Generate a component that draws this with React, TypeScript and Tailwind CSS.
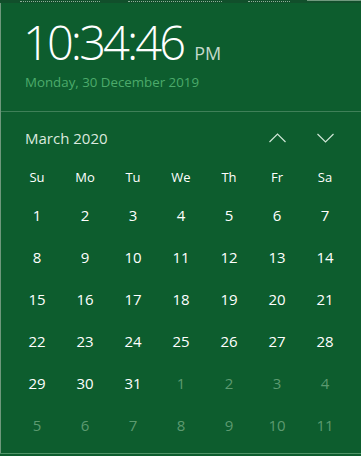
const days: { n: number; muted: boolean }[] = [
  ...Array.from({ length: 31 }, (_, i) => ({ n: i + 1, muted: false })),
  ...Array.from({ length: 11 }, (_, i) => ({ n: i + 1, muted: true })),
];

const weekdays = ["Su", "Mo", "Tu", "We", "Th", "Fr", "Sa"];

const Chevron = ({ up }: { up?: boolean }) => (
  <svg width="17" height="10" viewBox="0 0 17 10" fill="none">
    <path
      d={up ? "M0.5 9 L8.5 1 L16.5 9" : "M0.5 1 L8.5 9 L16.5 1"}
      stroke="#cfe6d6"
      strokeWidth="1.2"
    />
  </svg>
);

// bottoms of the window tab labels peeking in at the top edge
const tabMarks = [
  [20, 80],
  [128, 94],
  [248, 42],
];

export default function App() {
  return (
    <div
      className="w-[361px] h-[456px] bg-[#0d5d2e] overflow-hidden flex flex-col"
      style={{ fontFamily: '"Open Sans", "Noto Sans", sans-serif' }}
    >
      <div className="h-[3px] bg-[#114f2b] flex items-start">
        {tabMarks.map(([x, w], i) => (
          <div
            key={i}
            className="h-[2px] border-b border-dotted border-[#8fb09b]"
            style={{ marginLeft: i === 0 ? x : x - tabMarks[i - 1][0] - tabMarks[i - 1][1], width: w }}
          />
        ))}
        <div className="ml-auto w-[54px] h-[1px] bg-[#6f9a7e]" />
      </div>

      <div className="flex-1 flex flex-col border-l border-[#6e987c]">
        <div className="h-[109px] pl-[22px] pt-[14px] border-b border-[#3f8058]">
          <div className="flex items-baseline text-white">
            <span className="text-[47px] font-light leading-[50px] tracking-[-2.9px]">
              10:34:46
            </span>
            <span className="ml-[11px] text-[18px] text-[#c4d9cb]">PM</span>
          </div>
          <div className="mt-[7px] ml-[2px] text-[13.3px] leading-[16px] text-[#4cab6b]">
            Monday, 30 December 2019
          </div>
        </div>

        <div className="h-[50px] flex items-center pl-[24px] pr-[27px] pt-[2px]">
          <span className="text-[15px] text-[#dbe9df]">March 2020</span>
          <div className="ml-auto flex items-center gap-[31px]">
            <Chevron up />
            <Chevron />
          </div>
        </div>

        <div className="pl-[12px] grid grid-cols-[repeat(7,48px)]">
          {weekdays.map((d) => (
            <div
              key={d}
              className="h-[32px] flex items-center justify-center text-[13px] text-white"
            >
              {d}
            </div>
          ))}
          {days.map((d, i) => (
            <div
              key={i}
              className={`h-[42px] flex items-center justify-center text-[15px] ${
                d.muted ? "text-[#5c9a70]" : "text-white"
              }`}
            >
              {d.n}
            </div>
          ))}
        </div>
      </div>
      <div className="h-[3px] border-t border-[#4f9468]" />
    </div>
  );
}
